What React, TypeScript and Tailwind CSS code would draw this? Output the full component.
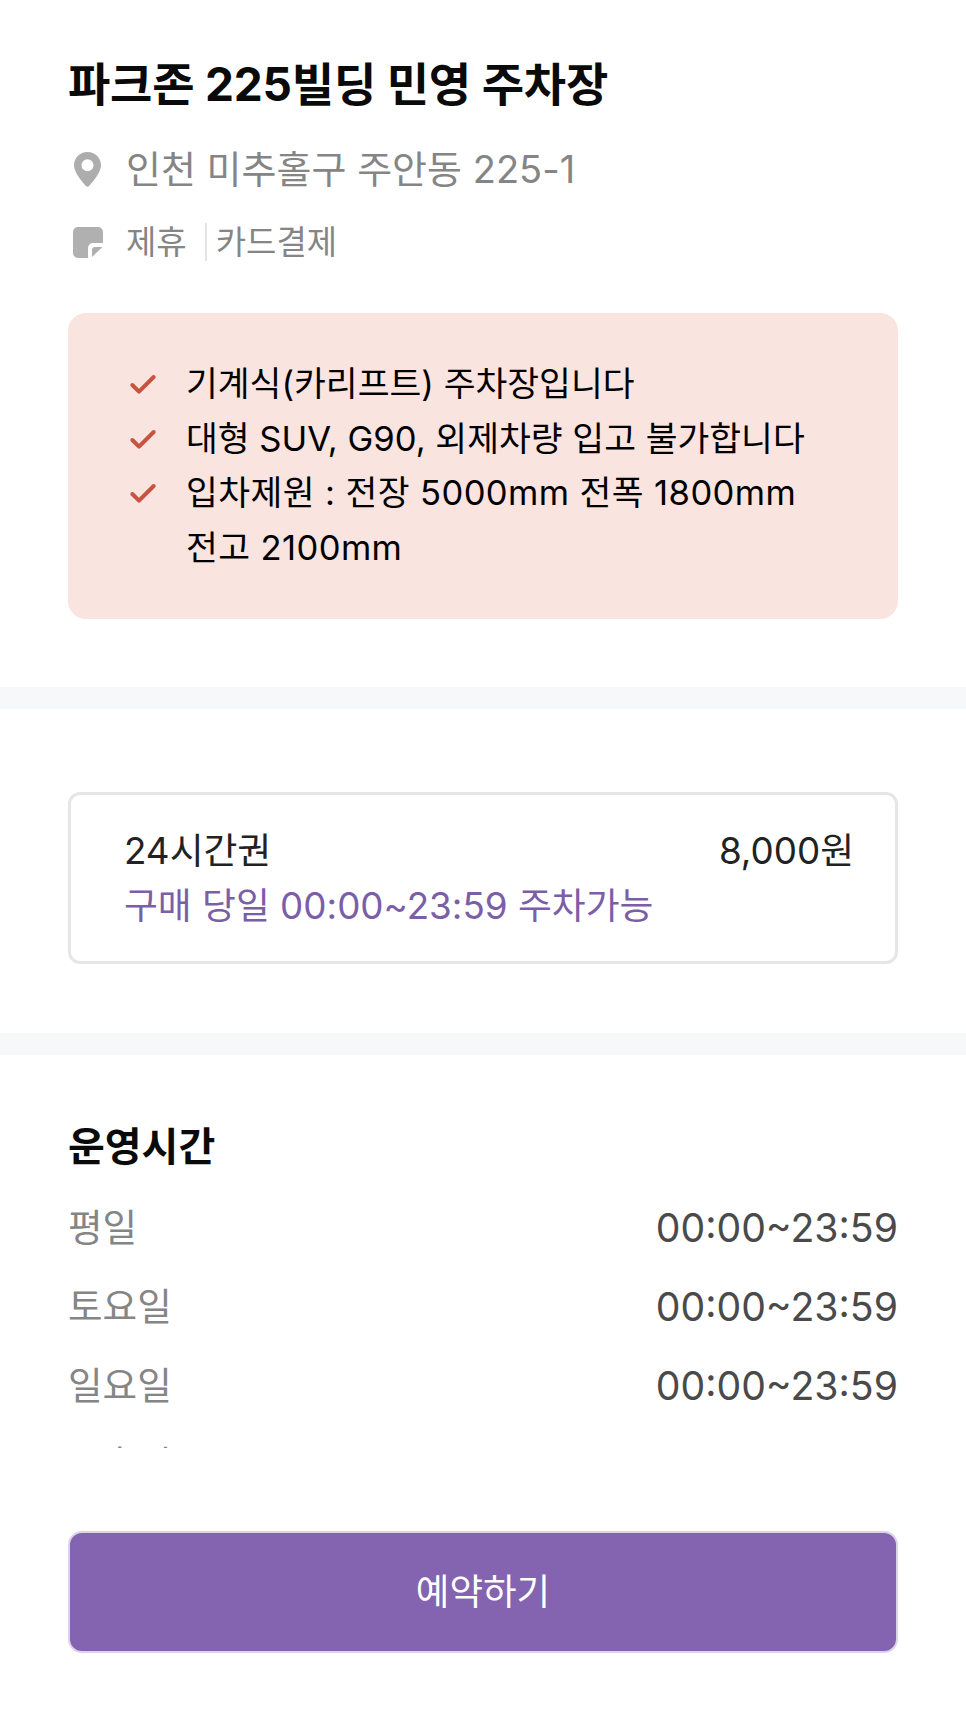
import { Check } from 'lucide-react';

const notices = [
  { text: '기계식(카리프트) 주차장입니다', className: '' },
  { text: '대형 SUV, G90, 외제차량 입고 불가합니다', className: '' },
  { text: '입차제원 : 전장 5000mm 전폭 1800mm 전고 2100mm', className: 'tracking-[0.4px]' },
];

const hours = [
  { day: '평일', time: '00:00~23:59' },
  { day: '토요일', time: '00:00~23:59' },
  { day: '일요일', time: '00:00~23:59' },
  { day: '공휴일', time: '00:00~23:59' },
];

function PinIcon() {
  return (
    <svg width="27" height="35" viewBox="0 0 26 34" preserveAspectRatio="none" className="shrink-0">
      <path
        fillRule="evenodd"
        d="M13 0C5.800 0 0 5.600 0 12.800 0 19.500 7.500 28.500 11.400 33 12.300 34 13.700 34 14.600 33 18.500 28.500 26 19.500 26 12.800 26 5.600 20.200 0 13 0Zm0 7a5.800 5.800 0 1 1 0 11.600A5.800 5.800 0 0 1 13 7Z"
        fill="#adadad"
      />
    </svg>
  );
}

function NoteIcon() {
  return (
    <svg width="30" height="31" viewBox="0 0 30 31" className="shrink-0">
      <path
        d="M5 0h20a5 5 0 0 1 5 5v11H20a5 5 0 0 0-5 5v10H5a5 5 0 0 1-5-5V5a5 5 0 0 1 5-5Z"
        fill="#b0b0b0"
      />
      <path d="M19 30v-7a3 3 0 0 1 3-3h7.500Z" fill="#b0b0b0" />
    </svg>
  );
}

export default function App() {
  return (
    <div className="flex h-[1723px] w-[966px] flex-col overflow-hidden bg-white font-['Inter','Noto_Sans_CJK_KR',sans-serif]">
      {/* 주차장 정보 */}
      <section className="h-[687px] shrink-0 px-[68px] pt-[55px]">
        <h1 className="text-[46px] leading-[58px] font-bold tracking-[-0.2px] text-[#0a0a0a]">파크존 225빌딩 민영 주차장</h1>
        <div className="mt-[34px] flex items-center gap-[25px] pl-[6px]">
          <PinIcon />
          <span className="text-[38px] leading-[44px] text-[#858585]">인천 미추홀구 주안동 225-1</span>
        </div>
        <div className="mt-[31px] flex items-center pl-[5px] text-[33px] leading-[40px] text-[#858585]">
          <NoteIcon />
          <span className="ml-[23px]">제휴</span>
          <span className="mr-[9px] ml-[18px] h-[38px] w-[2px] bg-[#e4e4e4]" />
          <span>카드결제</span>
        </div>
        <ul className="mt-[51px] h-[306px] rounded-[18px] bg-[#f9e4e0] py-[43px] pr-[80px] pl-[59px] text-[34.6px] leading-[54.5px] break-keep text-black">
          {notices.map((notice) => (
            <li key={notice.text} className="flex gap-[27px]">
              <Check size={32} strokeWidth={3} className="mt-[13px] shrink-0 text-[#c75340]" />
              <span className={notice.className}>{notice.text}</span>
            </li>
          ))}
        </ul>
      </section>

      <div className="h-[22px] shrink-0 bg-[#f7f8fa]" />

      {/* 이용권 */}
      <section className="h-[324px] shrink-0 px-[68px] pt-[83px]">
        <div className="flex h-[172px] flex-col justify-center rounded-[12px] border-[3px] border-[#e6e6e6] pr-[41px] pl-[53px] text-[36.8px] leading-[55px]">
          <div className="flex justify-between text-[#222222]">
            <span>24시간권</span>
            <span>8,000원</span>
          </div>
          <div className="text-[#7b5ea8]">구매 당일 00:00~23:59 주차가능</div>
        </div>
      </section>

      <div className="h-[22px] shrink-0 bg-[#f7f8fa]" />

      {/* 운영시간 */}
      <section className="h-[393px] shrink-0 overflow-hidden px-[68px] pt-[67px]">
        <h2 className="text-[40px] leading-[50px] font-bold text-[#0a0a0a]">운영시간</h2>
        <dl className="mt-[28px] flex flex-col gap-[23px]">
          {hours.map((row) => (
            <div key={row.day} className="flex items-center justify-between leading-[56px]">
              <dt className="text-[37.6px] text-[#858585]">{row.day}</dt>
              <dd className="text-[39.2px] text-[#4a4a4a]">{row.time}</dd>
            </div>
          ))}
        </dl>
      </section>

      <div className="px-[68px] pt-[83px]">
        <button className="flex h-[122px] w-full items-center justify-center rounded-[14px] border-[2px] border-[#dbd3e6] bg-[#8463b0] text-[36.500px] text-white">
          예약하기
        </button>
      </div>
    </div>
  );
}
